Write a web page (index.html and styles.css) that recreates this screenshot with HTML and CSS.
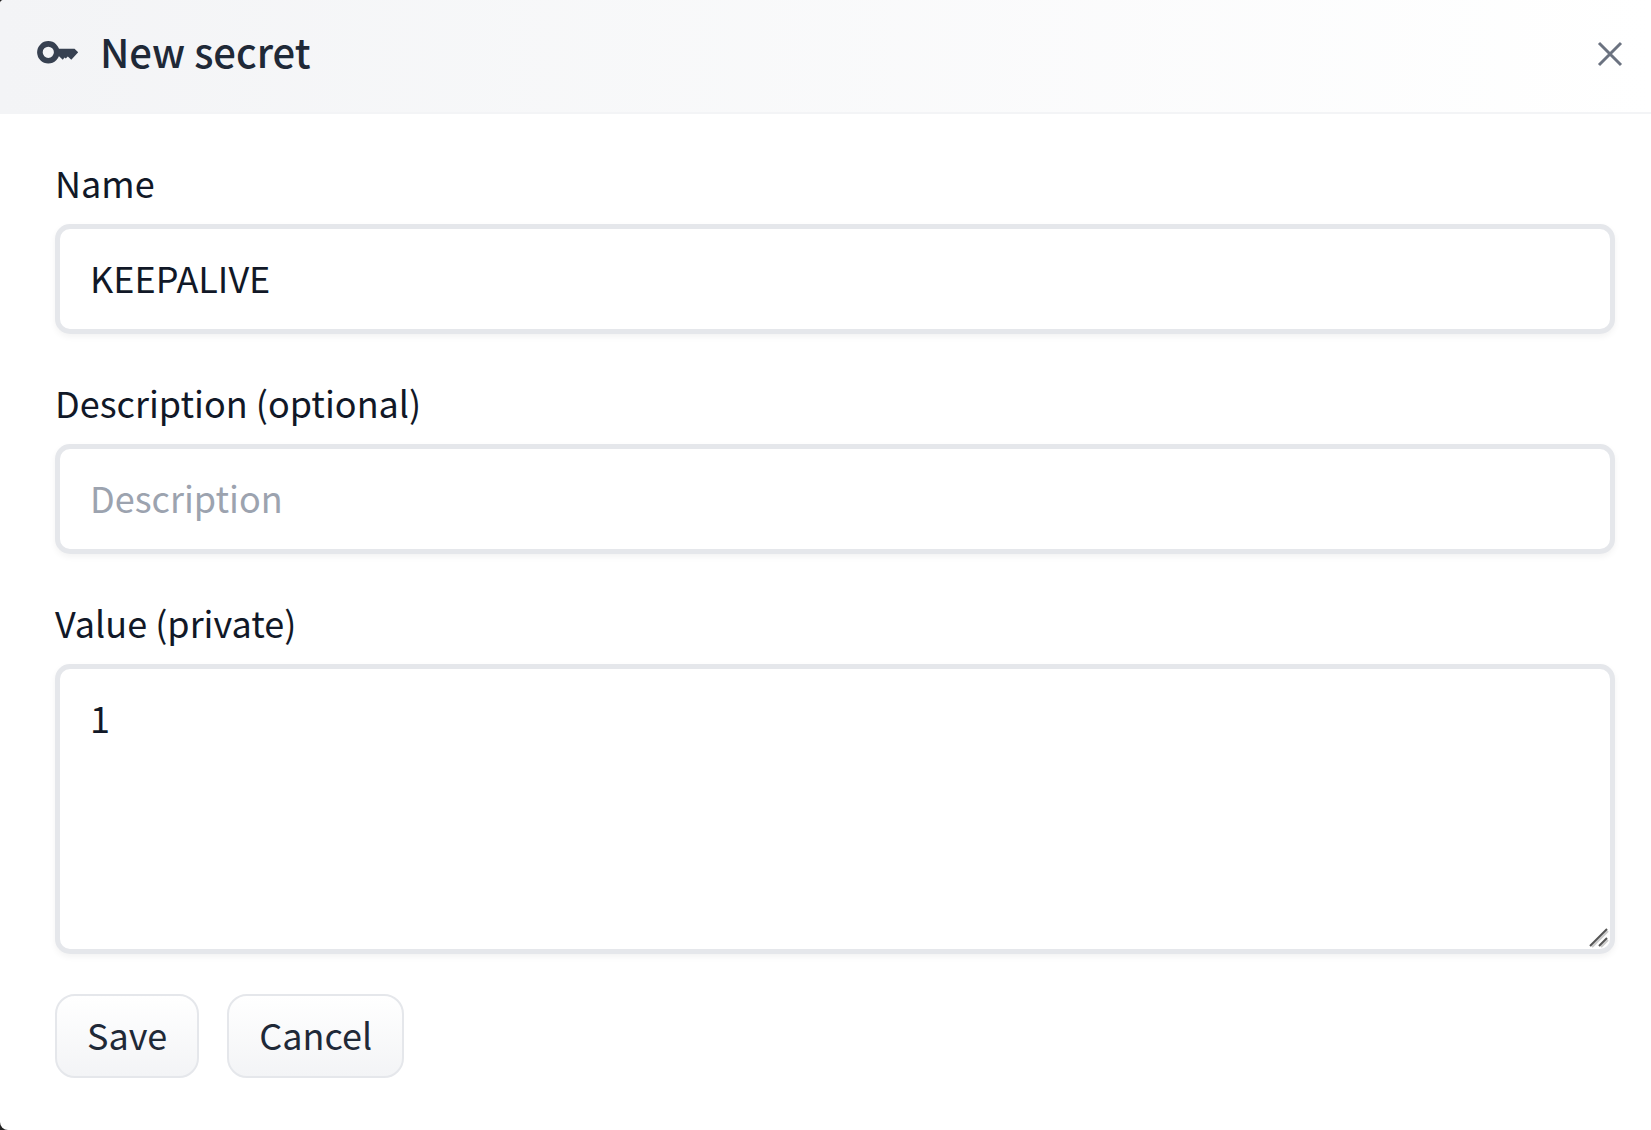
FILE: index.html
```html
<!DOCTYPE html>
<html lang="en">
<head>
<meta charset="utf-8">
<meta name="viewport" content="width=device-width, initial-scale=1">
<title>New secret</title>
<link rel="stylesheet" href="styles.css">
</head>
<body>
<main class="dialog" role="dialog" aria-labelledby="dialog-title">
  <header class="dialog-header">
    <svg class="key-icon" viewBox="0 0 42 24" aria-hidden="true">
      <circle class="key-ring" cx="11.300" cy="12.300" r="8.400"/>
      <path d="M19 8.700H37.500L41.200 12.300 34.300 19.700 30.800 16.500 28.800 18.500 27.500 17.500 25.800 19.700 22 16.300H19Z"/>
    </svg>
    <h1 class="dialog-title" id="dialog-title">New secret</h1>
    <button class="close-button" type="button" aria-label="Close">
      <svg class="close-icon" viewBox="0 0 28 28" aria-hidden="true"><path d="M3 3 25 25M25 3 3 25"/></svg>
    </button>
  </header>
  <form class="dialog-body">
    <div class="field">
      <label class="label" for="name">Name</label>
      <input class="control" id="name" type="text" value="KEEPALIVE">
    </div>
    <div class="field">
      <label class="label" for="description">Description (optional)</label>
      <input class="control" id="description" type="text" placeholder="Description">
    </div>
    <div class="field">
      <label class="label" for="value">Value (private)</label>
      <div class="textarea-wrap">
        <textarea class="control textarea" id="value" rows="4">1</textarea>
        <svg class="grip" viewBox="0 0 20 20" aria-hidden="true"><path class="grip-shade" d="M3 19 19 3M12 19l7-7"/><path class="grip-line" d="M1 18 18 1M10 18l8-8"/></svg>
      </div>
    </div>
    <div class="actions">
      <button class="button" type="button">Save</button>
      <button class="button" type="button">Cancel</button>
    </div>
  </form>
</main>
</body>
</html>
```

FILE: styles.css
```css
*, *::before, *::after {
  box-sizing: border-box;
}

html {
  background: #222;
}

body {
  margin: 0;
  color: #111827;
  font: 36px/56px "Noto Sans CJK SC", "Noto Sans", sans-serif;
}

.dialog {
  min-height: 100vh;
  background: #fff;
  border-radius: 4px 0 0 8px;
  overflow: hidden;
}

.dialog-header {
  display: flex;
  align-items: center;
  height: 114px;
  padding: 0 25px 8px 37px;
  border-bottom: 2px solid #f3f4f6;
  background: linear-gradient(to right, #f3f4f6, #fff);
}

.key-icon {
  width: 42px;
  height: 24px;
  margin-right: 21px;
  fill: #374151;
}

.key-ring {
  fill: none;
  stroke: #374151;
  stroke-width: 5.600;
}

.dialog-title {
  flex: 1;
  margin: 0 0 2px;
  color: #1f2937;
  font-size: 40px;
  font-weight: 500;
}

.close-button {
  display: flex;
  margin-top: 4px;
  padding: 2px;
  border: 0;
  background: none;
}

.close-icon {
  width: 28px;
  height: 28px;
  fill: none;
  stroke: #6b7280;
  stroke-width: 3;
}

.dialog-body {
  display: flex;
  flex-direction: column;
  gap: 40px;
  padding: 40px 36px 52px 55px;
}

.field {
  display: flex;
  flex-direction: column;
  gap: 14px;
}

.control {
  display: block;
  width: 100%;
  height: 110px;
  margin: 0;
  padding: 20px 30px 24px;
  border: 5px solid #e5e7eb;
  border-radius: 15px;
  background: #fff;
  box-shadow: 0 3px 6px rgba(0, 0, 0, .05);
  color: inherit;
  font: inherit;
}

.control::placeholder {
  color: #9ca3af;
}

.textarea-wrap {
  position: relative;
}

.textarea {
  height: 290px;
  resize: none;
}

.grip {
  position: absolute;
  right: 6px;
  bottom: 6px;
  width: 20px;
  height: 20px;
  fill: none;
  stroke-width: 2;
}

.grip-line {
  stroke: #555;
}

.grip-shade {
  stroke: #ccc;
}

.actions {
  display: flex;
  gap: 28px;
}

.button {
  height: 84px;
  padding: 0 30px 4px;
  border: 2px solid #e5e7eb;
  border-radius: 20px;
  background: linear-gradient(to bottom, #fff, #f3f4f6);
  color: #1f2937;
  font: inherit;
}
```
